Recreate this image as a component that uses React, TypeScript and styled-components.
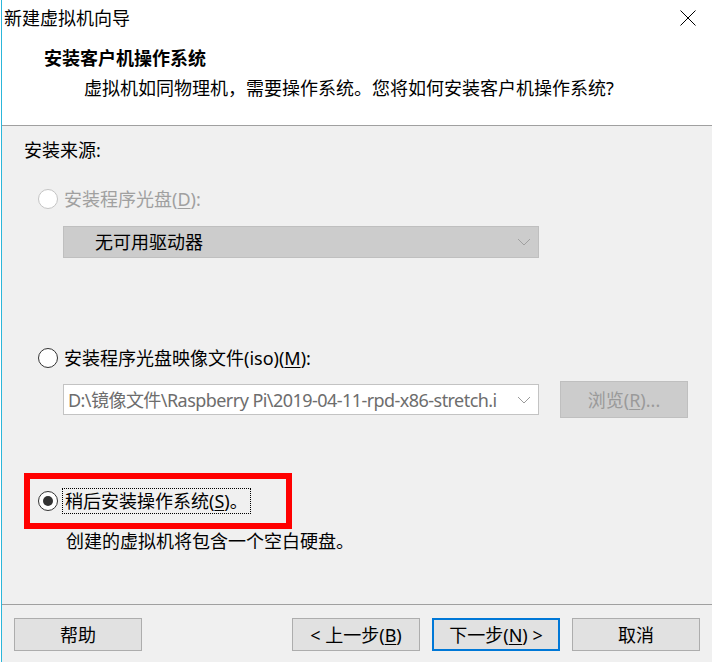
import React from "react";
import styled, { createGlobalStyle } from "styled-components";

const Global = createGlobalStyle`
  html, body { margin: 0; padding: 0; background: #ffffff; }
  * { box-sizing: border-box; }
`;

const FONT = `"Noto Sans", "Noto Sans CJK SC", sans-serif`;

const Window = styled.div`
  width: 711px;
  height: 662px;
  margin-left: 1px;
  border-left: 1px solid #2cb6da;
  display: flex;
  flex-direction: column;
  background: #f0f0f0;
  font-family: ${FONT};
  font-size: 18px;
  color: #000;
  overflow: hidden;
`;

const Header = styled.div`
  flex-shrink: 0;
  height: 126px;
  background: #ffffff;
  border-bottom: 1px solid #a0a0a0;
  display: flex;
  flex-direction: column;
`;

const TitleBar = styled.div`
  height: 36px;
  display: flex;
  align-items: center;
  justify-content: space-between;
  padding: 0 16px 0 2px;
  line-height: 36px;
`;

const Heading = styled.div`
  margin: 10px 0 0 42px;
  line-height: 24px;
  font-weight: 700;
`;

const SubHeading = styled.div`
  margin: 6px 0 0 82px;
  line-height: 24px;
`;

const Body = styled.div`
  flex: 1;
  display: flex;
  flex-direction: column;
  align-items: flex-start;
  padding: 12px 0 0 22px;
`;

const Label = styled.div<{ $indent?: number; $top?: number }>`
  line-height: 24px;
  margin-left: ${(p) => p.$indent ?? 0}px;
  margin-top: ${(p) => p.$top ?? 0}px;
`;

const RadioRow = styled.div<{ $top?: number; $indent?: number; $disabled?: boolean }>`
  display: flex;
  align-items: center;
  gap: 6px;
  height: 24px;
  line-height: 24px;
  margin-top: ${(p) => p.$top ?? 0}px;
  padding-left: ${(p) => p.$indent ?? 0}px;
  color: ${(p) => (p.$disabled ? "#a0a0a0" : "#000")};
`;

const RadioCircle = styled.span<{ $checked?: boolean; $disabled?: boolean }>`
  position: relative;
  width: 20px;
  height: 20px;
  flex-shrink: 0;
  border-radius: 50%;
  background: #fff;
  border: 1px solid ${(p) => (p.$disabled ? "#c4c4c4" : "#333333")};
  &::after {
    content: "";
    display: ${(p) => (p.$checked ? "block" : "none")};
    position: absolute;
    left: 4px;
    top: 4px;
    width: 10px;
    height: 10px;
    border-radius: 50%;
    background: #333333;
  }
`;

const FocusText = styled.span`
  margin-left: -2px;
  padding: 0 2px;
  line-height: 24px;
  border: 1px dotted #000;
`;

const U = styled.span`
  text-decoration: underline;
  text-underline-offset: 2px;
`;

const Select = styled.div<{ $disabled?: boolean; $top?: number; $indent?: number }>`
  width: 476px;
  height: ${(p) => (p.$disabled ? 32 : 31)}px;
  margin-left: ${(p) => p.$indent ?? 0}px;
  margin-top: ${(p) => p.$top ?? 0}px;
  display: flex;
  align-items: center;
  border: 1px solid ${(p) => (p.$disabled ? "#bfbfbf" : "#c3c3c3")};
  background: ${(p) => (p.$disabled ? "#cccccc" : "#ffffff")};
  flex-shrink: 0;
`;

const SelectText = styled.div<{ $pad: number; $color: string; $width: number; $tight?: boolean }>`
  width: ${(p) => p.$width}px;
  padding-left: ${(p) => p.$pad}px;
  white-space: nowrap;
  color: ${(p) => p.$color};
  line-height: 24px;
  letter-spacing: ${(p) => (p.$tight ? "-0.55px" : "normal")};
`;

const Chevron = styled.svg`
  margin-left: auto;
  margin-right: 7px;
  flex-shrink: 0;
`;

const ComboRow = styled.div`
  display: flex;
  align-items: center;
  gap: 21px;
  margin-top: 11px;
  margin-left: 39px;
`;

const Button = styled.button<{ $disabled?: boolean; $default?: boolean }>`
  width: 128px;
  height: 33px;
  padding: 0;
  font-family: ${FONT};
  font-size: 18px;
  line-height: 24px;
  color: ${(p) => (p.$disabled ? "#9a9a9a" : "#000")};
  background: ${(p) => (p.$disabled ? "#cccccc" : "#e1e1e1")};
  border: ${(p) => (p.$default ? "2px solid #0078d7" : p.$disabled ? "1px solid #bfbfbf" : "1px solid #adadad")};
  flex-shrink: 0;
`;

const BrowseButton = styled(Button)`
  height: 37px;
`;

const RedBox = styled.div`
  margin-top: 55px;
  width: 268px;
  height: 56px;
  border: 6px solid #ff0000;
  display: flex;
  align-items: center;
  padding-left: 8px;
`;

const Footer = styled.div`
  flex-shrink: 0;
  height: 58px;
  border-top: 1px solid #a0a0a0;
  display: flex;
  align-items: flex-start;
  padding: 13px 12px 0 12px;
`;

const NavGroup = styled.div`
  margin-left: auto;
  display: flex;
  gap: 12px;
`;

const ChevronIcon = ({ color }: { color: string }) => (
  <Chevron width="14" height="8" viewBox="0 0 14 8">
    <polyline points="1,1 7,7 13,1" fill="none" stroke={color} strokeWidth="1" />
  </Chevron>
);

export default function App() {
  return (
    <>
      <Global />
      <Window>
        <Header>
          <TitleBar>
            <span>新建虚拟机向导</span>
            <svg width="16" height="16" viewBox="0 0 16 16">
              <line x1="0.5" y1="0.5" x2="15.5" y2="15.5" stroke="#000" strokeWidth="1" />
              <line x1="15.5" y1="0.5" x2="0.5" y2="15.5" stroke="#000" strokeWidth="1" />
            </svg>
          </TitleBar>
          <Heading>安装客户机操作系统</Heading>
          <SubHeading>虚拟机如同物理机，需要操作系统。您将如何安装客户机操作系统?</SubHeading>
        </Header>
        <Body>
          <Label>安装来源:</Label>
          <RadioRow $top={25} $indent={14} $disabled>
            <RadioCircle $disabled />
            <span>
              安装程序光盘(<U>D</U>):
            </span>
          </RadioRow>
          <Select $disabled $top={15} $indent={39}>
            <SelectText $pad={31} $color="#000" $width={300}>
              无可用驱动器
            </SelectText>
            <ChevronIcon color="#a0a0a0" />
          </Select>
          <RadioRow $top={88} $indent={14}>
            <RadioCircle />
            <span>
              安装程序光盘映像文件(iso)(<U>M</U>):
            </span>
          </RadioRow>
          <ComboRow>
            <Select>
              <SelectText $pad={4} $color="#6d6d6d" $width={448} $tight>
                D:\镜像文件\Raspberry Pi\2019-04-11-rpd-x86-stretch.i
              </SelectText>
              <ChevronIcon color="#9a9a9a" />
            </Select>
            <BrowseButton $disabled>
              浏览(<U>R</U>)...
            </BrowseButton>
          </ComboRow>
          <RedBox>
            <RadioRow>
              <RadioCircle $checked />
              <FocusText>
                稍后安装操作系统(<U>S</U>)。
              </FocusText>
            </RadioRow>
          </RedBox>
          <Label $indent={42}>创建的虚拟机将包含一个空白硬盘。</Label>
        </Body>
        <Footer>
          <Button>帮助</Button>
          <NavGroup>
            <Button>
              &lt; 上一步(<U>B</U>)
            </Button>
            <Button $default>
              下一步(<U>N</U>) &gt;
            </Button>
            <Button>取消</Button>
          </NavGroup>
        </Footer>
      </Window>
    </>
  );
}
